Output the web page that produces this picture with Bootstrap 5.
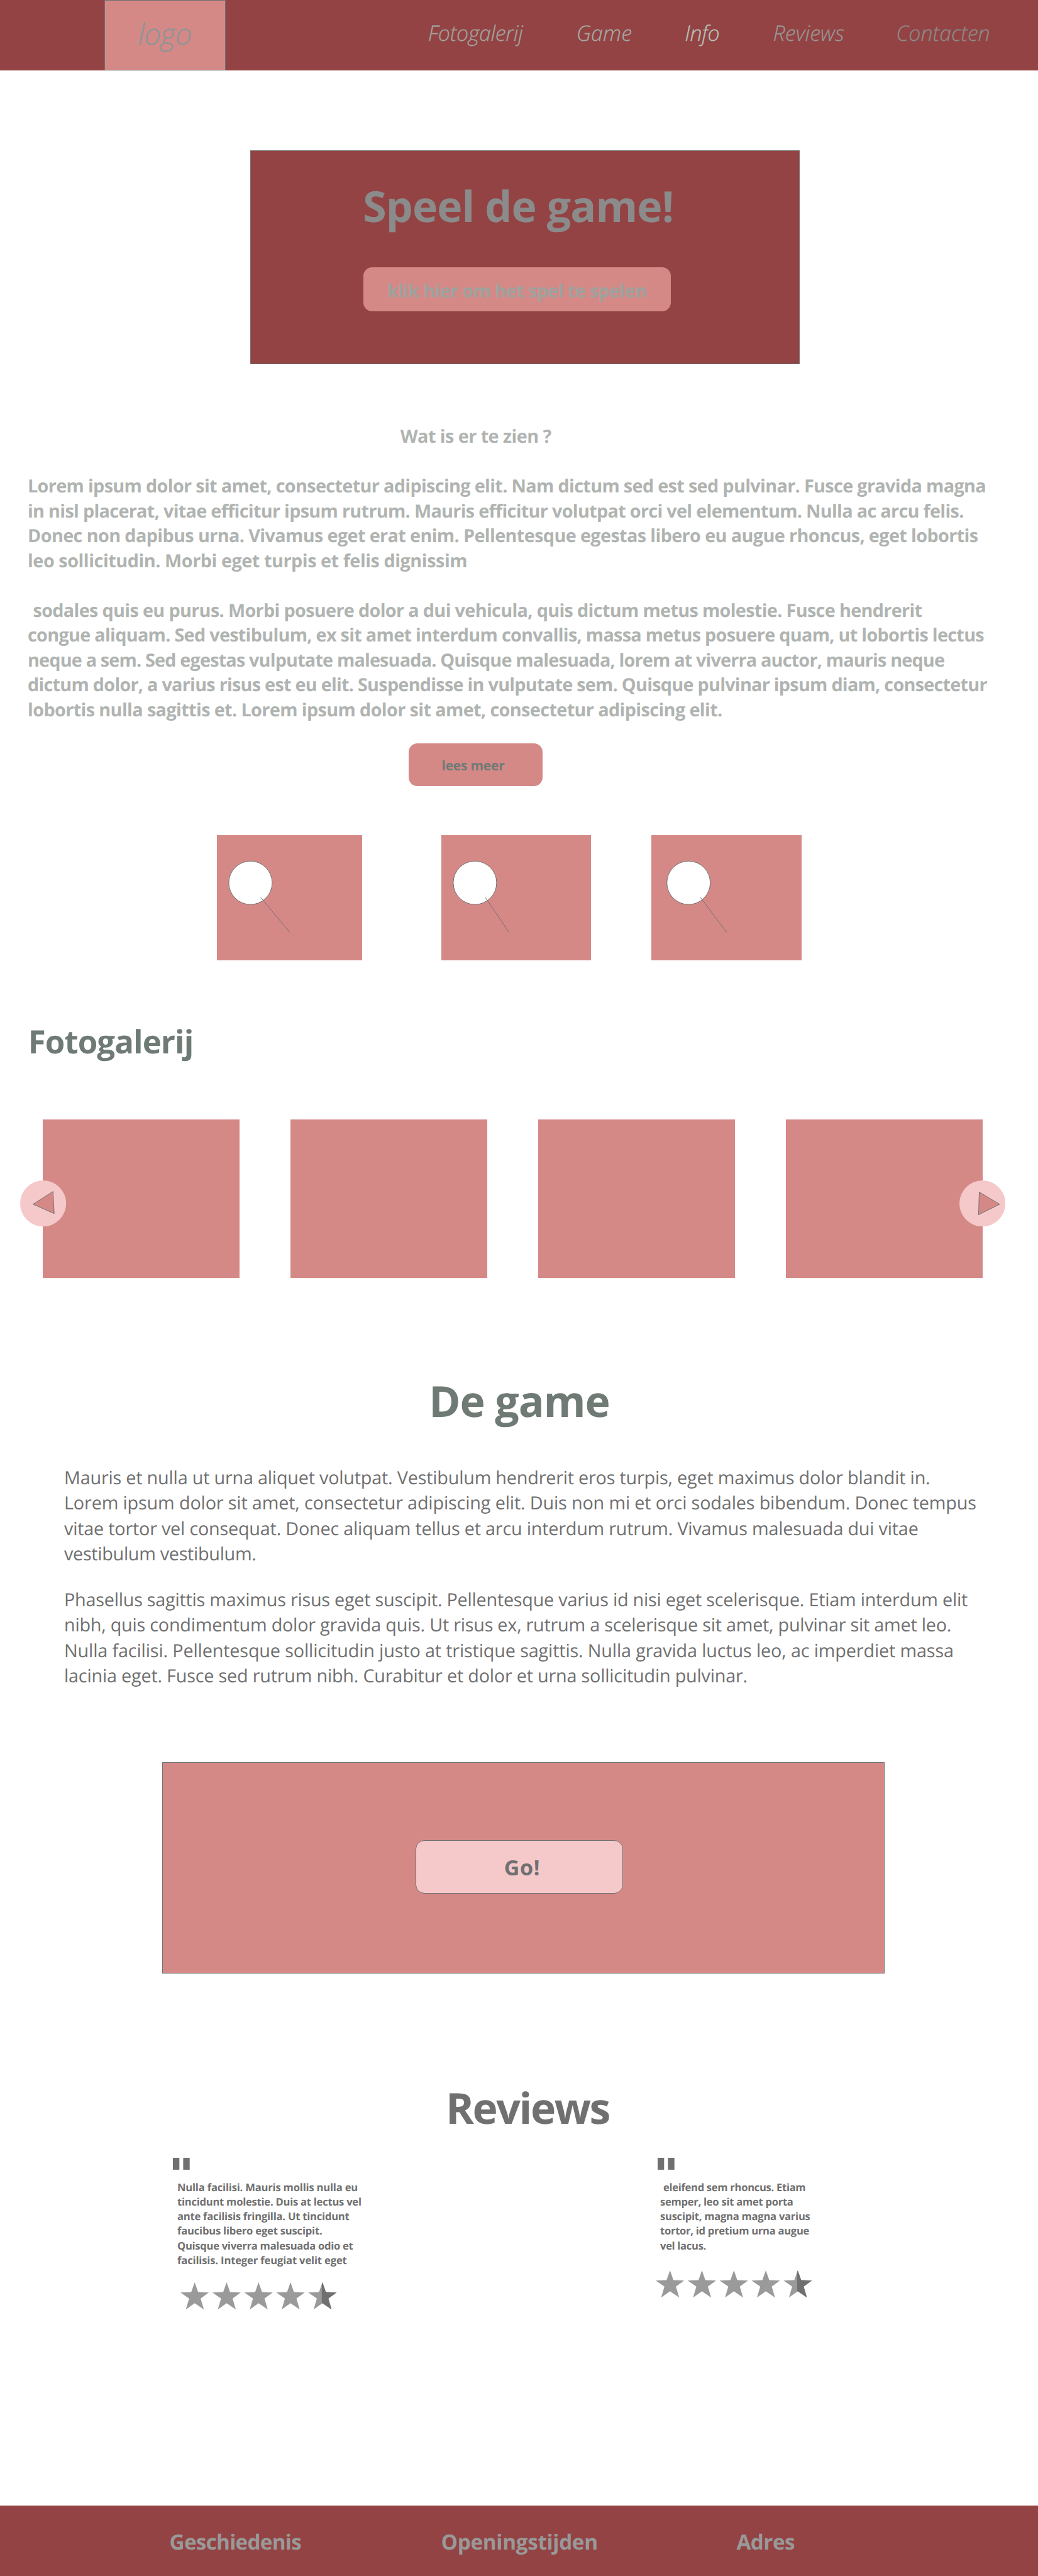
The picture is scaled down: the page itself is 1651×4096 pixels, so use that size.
<!DOCTYPE html>
<html lang="nl">
<head>
<meta charset="utf-8">
<meta name="viewport" content="width=device-width, initial-scale=1">
<title>Speel de game!</title>
<link rel="stylesheet" href="https://cdn.jsdelivr.net/npm/bootstrap@5.3.0/dist/css/bootstrap.min.css">
<style>
:root{--dark:#934343;--rose:#d58987;--blush:#f5c8ca;--line:#707070;--sage:#6f7a75;--mist:#b0b4b1}
body{font-family:"Open Sans","Noto Sans",sans-serif;min-height:4096px;background:#fff;color:var(--line);text-rendering:geometricPrecision;overflow-x:hidden}
h1,h2,p,.ln{margin:0;white-space:nowrap}
.ln{display:block}
.bg-dark-red{background:var(--dark)}
.bg-rose{background:var(--rose)}

/* header */
.site-head{height:112px;padding-left:166.4px}
.logo-box{width:192.4px;border:1px solid var(--line);padding-left:52px;font:italic 300 47px/105px "Open Sans",sans-serif;letter-spacing:-.6px;color:#949494;-webkit-text-stroke:.6px #949494}
.menu{margin-left:322px;font:italic 300 34px/105px "Open Sans",sans-serif}
.menu a{color:#9e9e9c;text-decoration:none;white-space:nowrap;-webkit-text-stroke:.3px currentColor}
.menu a:nth-child(1){width:235.9px;letter-spacing:-.36px;color:#a1a39f}
.menu a:nth-child(2){width:172.6px;letter-spacing:.12px;color:#a3aaa4}
.menu a:nth-child(3){width:140.2px;letter-spacing:-.31px;color:#b8c2bb}
.menu a:nth-child(4){width:195.9px;letter-spacing:.09px;color:#979797}
.menu a:nth-child(5){letter-spacing:-.11px;color:#8b8b8b}

.title-xl{font-size:68px;line-height:94px;font-weight:700}

/* hero */
.hero{margin:127.1px 0 0 398.1px;width:874.4px;height:339.8px;border:1px solid var(--line);padding:39.5px 0 0 178.9px}
.hero h1{color:#8b8b8b;letter-spacing:-.85px;margin-left:-.8px}
.btn-flat{display:block;border:0;border-radius:14px;padding:0;text-align:left;font-weight:700;white-space:nowrap;background:var(--rose)}
.btn-play{margin-top:51px;width:488.6px;height:70.8px;padding-left:38px;font-size:28.8px;line-height:73.4px;letter-spacing:-.656px;color:#9ca39e}

/* intro copy */
.intro{margin:95px 0 0 44px;font-size:28.8px;line-height:39.56px;font-weight:700;color:var(--mist)}
.intro .lead-in{padding-left:592.8px;letter-spacing:-.553px;margin-bottom:39.56px}
.intro p+p{margin-top:39.56px}
.pa .ln:nth-child(1){letter-spacing:-.659px}
.pa .ln:nth-child(2){letter-spacing:-.691px}
.pa .ln:nth-child(3){letter-spacing:-.622px}
.pa .ln:nth-child(4){letter-spacing:-.455px}
.pb .ln:nth-child(1){letter-spacing:-.664px;padding-left:8.5px}
.pb .ln:nth-child(2){letter-spacing:-.705px}
.pb .ln:nth-child(3){letter-spacing:-.824px}
.pb .ln:nth-child(4){letter-spacing:-.74px}
.pb .ln:nth-child(5){letter-spacing:-.615px}
.btn-more{margin:33.8px 0 0 650.2px;width:213.3px;height:67.1px;padding-left:52.3px;font-size:21px;line-height:71px;letter-spacing:-.225px;color:var(--sage)}

/* search tiles */
.tiles{margin:78.5px 0 0 344.9px}
.tiles svg{display:block;height:198.5px;background:var(--rose);fill:#fff;stroke:var(--line)}
.tile-1{width:231px;margin-right:126.5px}
.tile-2{width:237.5px;margin-right:96.4px}
.tile-3{width:238.3px}

/* gallery */
.gal-title{margin:93.8px 0 0 44.8px;font-size:51px;line-height:70px;font-weight:700;letter-spacing:-.94px;color:var(--sage)}
.gallery{margin:89.3px 0 0 68.4px;width:1494.4px;height:252px;gap:80.9px}
.arrow{position:absolute;top:97.4px;width:73.2px;height:73.2px}
.arrow.prev{left:-36.6px}
.arrow.next{right:-36.6px}
.arrow circle{fill:var(--blush)}
.arrow path{fill:var(--rose);stroke:var(--line)}

/* game copy */
.game-title{margin:148.4px 0 0 682.2px;letter-spacing:-1px;color:var(--sage)}
.story{margin:55.8px 0 0 102px;font-size:28.8px;line-height:40.42px}
.story p+p{margin-top:32.5px}
.ga .ln:nth-child(1){letter-spacing:-.211px}
.ga .ln:nth-child(2){letter-spacing:-.16px}
.ga .ln:nth-child(3){letter-spacing:-.217px}
.ga .ln:nth-child(4){letter-spacing:-.312px}
.gb .ln:nth-child(1){letter-spacing:-.243px}
.gb .ln:nth-child(2){letter-spacing:-.238px}
.gb .ln:nth-child(3){letter-spacing:-.153px}
.gb .ln:nth-child(4){letter-spacing:-.211px}
.go-panel{margin:116.4px 0 0 257.6px;width:1149.2px;height:335.6px;border:1px solid var(--line);padding:122.6px 0 0 402.2px}
.btn-go{width:330px;height:85.8px;border:1px solid var(--line);background:var(--blush);padding-left:140px;font-size:34px;line-height:80px;letter-spacing:.6px;color:var(--line)}

/* reviews */
.rev-title{margin:166.4px 0 0 709px;letter-spacing:-2.4px;color:var(--line)}
.reviews{margin:32.8px 0 0 275px}
.review{width:768px;font-size:16.6px;line-height:23.2px;font-weight:700}
.quote{display:block;width:27px;height:19px;fill:var(--line)}
.review p{padding:15.9px 0 0 7px}
.stars{display:block;width:249px;height:44px;fill:#9a9a9a}
.ra .ln:nth-child(1){letter-spacing:-.196px}
.ra .ln:nth-child(2){letter-spacing:-.248px}
.ra .ln:nth-child(3){letter-spacing:-.228px}
.ra .ln:nth-child(4){letter-spacing:-.199px}
.ra .ln:nth-child(5){letter-spacing:-.28px}
.ra .ln:nth-child(6){letter-spacing:-.156px}
.ra .stars{margin:23.9px 0 0 12px}
.rb{width:300px}
.rb .quote{margin-left:2.8px}
.rb .ln:nth-child(1){letter-spacing:-.3px;padding-left:4.9px}
.rb .ln:nth-child(2){letter-spacing:-.273px}
.rb .ln:nth-child(3){letter-spacing:-.262px}
.rb .ln:nth-child(4){letter-spacing:-.283px}
.rb .ln:nth-child(5){letter-spacing:-.314px}
.rb .stars{margin:27.9px 0 0 0}

/* footer */
.site-foot{height:112.4px;padding:35.6px 0 0 269.6px;font-size:33.3px;line-height:45px;font-weight:700;color:#999}
.site-foot span:nth-child(1){width:432px;letter-spacing:-.753px}
.site-foot span:nth-child(2){width:469.8px;letter-spacing:-.343px}
.site-foot span:nth-child(3){letter-spacing:-.537px}
</style>
</head>
<body class="d-flex flex-column">

<header class="site-head bg-dark-red d-flex flex-shrink-0">
  <div class="logo-box bg-rose flex-shrink-0">logo</div>
  <nav class="menu d-flex">
    <a class="flex-shrink-0" href="#foto">Fotogalerij</a><a class="flex-shrink-0" href="#game">Game</a><a class="flex-shrink-0" href="#info">Info</a><a class="flex-shrink-0" href="#reviews">Reviews</a><a class="flex-shrink-0" href="#contact">Contacten</a>
  </nav>
</header>

<section class="hero bg-dark-red flex-shrink-0">
  <h1 class="title-xl">Speel de game!</h1>
  <button class="btn btn-flat btn-play" type="button">klik hier om het spel te spelen</button>
</section>

<section id="info" class="intro">
  <span class="ln lead-in">Wat is er te zien ?</span>
  <p class="pa"><span class="ln">Lorem ipsum dolor sit amet, consectetur adipiscing elit. Nam dictum sed est sed pulvinar. Fusce gravida magna</span><span class="ln">in nisl placerat, vitae efficitur ipsum rutrum. Mauris efficitur volutpat orci vel elementum. Nulla ac arcu felis.</span><span class="ln">Donec non dapibus urna. Vivamus eget erat enim. Pellentesque egestas libero eu augue rhoncus, eget lobortis</span><span class="ln">leo sollicitudin. Morbi eget turpis et felis dignissim</span></p>
  <p class="pb"><span class="ln">sodales quis eu purus. Morbi posuere dolor a dui vehicula, quis dictum metus molestie. Fusce hendrerit</span><span class="ln">congue aliquam. Sed vestibulum, ex sit amet interdum convallis, massa metus posuere quam, ut lobortis lectus</span><span class="ln">neque a sem. Sed egestas vulputate malesuada. Quisque malesuada, lorem at viverra auctor, mauris neque</span><span class="ln">dictum dolor, a varius risus est eu elit. Suspendisse in vulputate sem. Quisque pulvinar ipsum diam, consectetur</span><span class="ln">lobortis nulla sagittis et. Lorem ipsum dolor sit amet, consectetur adipiscing elit.</span></p>
</section>
<button class="btn btn-flat btn-more flex-shrink-0" type="button">lees meer</button>

<section class="tiles d-flex">
  <svg class="tile-1 flex-shrink-0"><circle cx="53.4" cy="75.7" r="34.5"/><path d="M69.9 99.2 115.8 154.5"/></svg>
  <svg class="tile-2 flex-shrink-0"><circle cx="53.4" cy="75.7" r="34.5"/><path d="M70.1 99.2 107.8 154.5"/></svg>
  <svg class="tile-3 flex-shrink-0"><circle cx="59.2" cy="75.7" r="34.5"/><path d="M78.3 99.2 119.8 154.5"/></svg>
</section>

<h2 id="foto" class="gal-title">Fotogalerij</h2>
<section class="gallery d-flex position-relative flex-shrink-0">
  <div class="bg-rose flex-fill"></div>
  <div class="bg-rose flex-fill"></div>
  <div class="bg-rose flex-fill"></div>
  <div class="bg-rose flex-fill"></div>
  <svg class="arrow prev" viewBox="0 0 73.2 73.2"><circle cx="36.6" cy="36.6" r="36.6"/><path d="M52.3 17.6 20.6 37.8 54.2 52.7Z"/></svg>
  <svg class="arrow next" viewBox="0 0 73.2 73.2"><circle cx="36.6" cy="36.6" r="36.6"/><path d="M31.5 18.5 64 37.8 30.5 54.5Z"/></svg>
</section>

<h2 id="game" class="title-xl game-title">De game</h2>
<section class="story">
  <p class="ga"><span class="ln">Mauris et nulla ut urna aliquet volutpat. Vestibulum hendrerit eros turpis, eget maximus dolor blandit in.</span><span class="ln">Lorem ipsum dolor sit amet, consectetur adipiscing elit. Duis non mi et orci sodales bibendum. Donec tempus</span><span class="ln">vitae tortor vel consequat. Donec aliquam tellus et arcu interdum rutrum. Vivamus malesuada dui vitae</span><span class="ln">vestibulum vestibulum.</span></p>
  <p class="gb"><span class="ln">Phasellus sagittis maximus risus eget suscipit. Pellentesque varius id nisi eget scelerisque. Etiam interdum elit</span><span class="ln">nibh, quis condimentum dolor gravida quis. Ut risus ex, rutrum a scelerisque sit amet, pulvinar sit amet leo.</span><span class="ln">Nulla facilisi. Pellentesque sollicitudin justo at tristique sagittis. Nulla gravida luctus leo, ac imperdiet massa</span><span class="ln">lacinia eget. Fusce sed rutrum nibh. Curabitur et dolor et urna sollicitudin pulvinar.</span></p>
</section>
<section class="go-panel bg-rose flex-shrink-0">
  <button class="btn btn-flat btn-go" type="button">Go!</button>
</section>

<h2 id="reviews" class="title-xl rev-title">Reviews</h2>
<svg width="0" height="0" class="position-absolute"><defs>
  <path id="star" d="M22.7 0 28.1 15.5 45.2 16.3 32.1 25.8 37.3 43.3 22.7 33.3 8.6 43.3 13.8 25.8 0 16.3 17.2 15.5Z"/>
  <path id="half" d="M22.7 0 28.1 15.5 45.2 16.3 32.1 25.8 37.3 43.3 22.7 33.3 21.7 33.6 21.7 3Z"/>
</defs></svg>
<section class="reviews d-flex">
  <article class="review ra flex-shrink-0">
    <svg class="quote"><path d="M0 0h10.3v19H0zM16.4 0h10.3v19H16.4z"/></svg>
    <p><span class="ln">Nulla facilisi. Mauris mollis nulla eu</span><span class="ln">tincidunt molestie. Duis at lectus vel</span><span class="ln">ante facilisis fringilla. Ut tincidunt</span><span class="ln">faucibus libero eget suscipit.</span><span class="ln">Quisque viverra malesuada odio et</span><span class="ln">facilisis. Integer feugiat velit eget</span></p>
    <svg class="stars"><use href="#star"/><use href="#star" x="50.8"/><use href="#star" x="101.6"/><use href="#star" x="152.4"/><use href="#star" x="203.2"/><use href="#half" x="203.2" fill="#707070"/></svg>
  </article>
  <article class="review rb flex-shrink-0">
    <svg class="quote"><path d="M0 0h10.3v19H0zM16.4 0h10.3v19H16.4z"/></svg>
    <p><span class="ln">eleifend sem rhoncus. Etiam</span><span class="ln">semper, leo sit amet porta</span><span class="ln">suscipit, magna magna varius</span><span class="ln">tortor, id pretium urna augue</span><span class="ln">vel lacus.</span></p>
    <svg class="stars"><use href="#star"/><use href="#star" x="50.8"/><use href="#star" x="101.6"/><use href="#star" x="152.4"/><use href="#star" x="203.2"/><use href="#half" x="203.2" fill="#707070"/></svg>
  </article>
</section>

<footer id="contact" class="site-foot bg-dark-red d-flex mt-auto flex-shrink-0">
  <span>Geschiedenis</span><span>Openingstijden</span><span>Adres</span>
</footer>

<script src="https://cdn.jsdelivr.net/npm/bootstrap@5.3.0/dist/js/bootstrap.bundle.min.js"></script>
</body>
</html>
